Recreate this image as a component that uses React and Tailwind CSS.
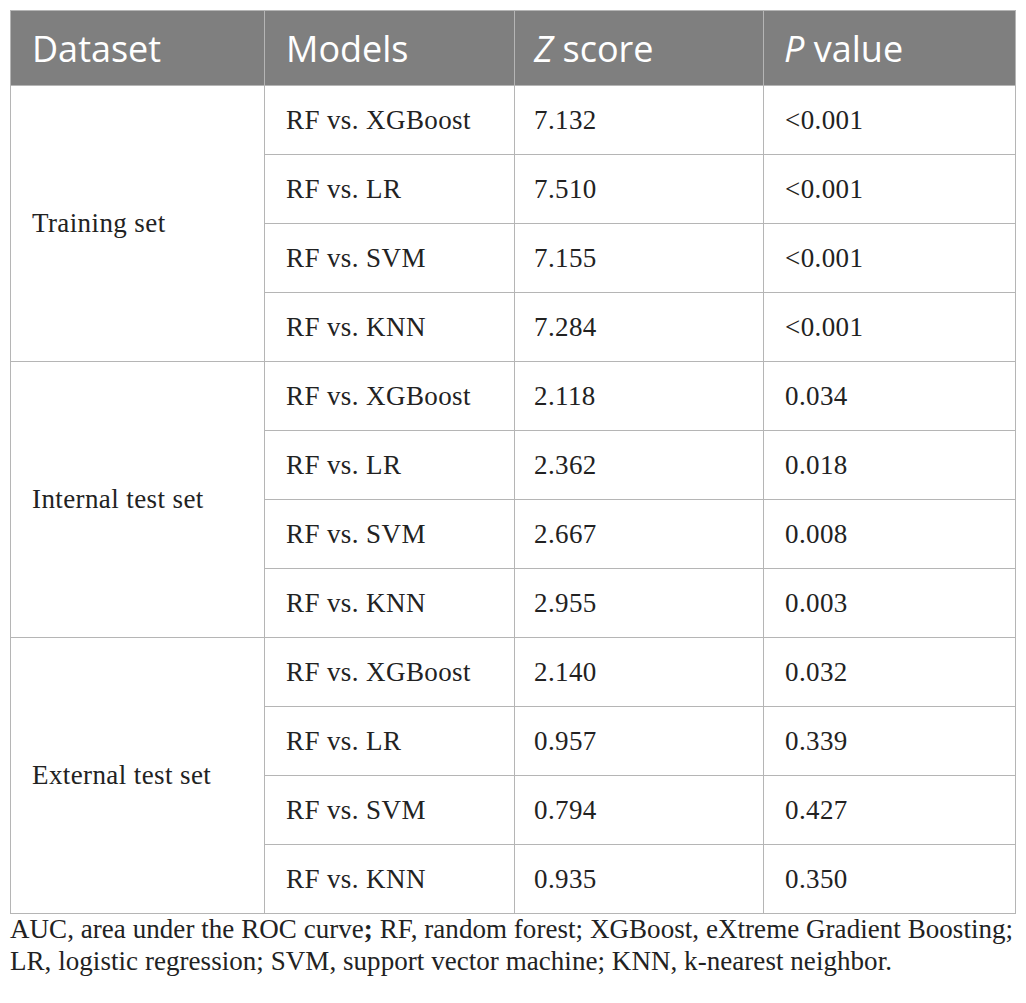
import React from "react";

const groups = [
  {
    name: "Training set",
    rows: [
      ["RF vs. XGBoost", "7.132", "<0.001"],
      ["RF vs. LR", "7.510", "<0.001"],
      ["RF vs. SVM", "7.155", "<0.001"],
      ["RF vs. KNN", "7.284", "<0.001"],
    ],
  },
  {
    name: "Internal test set",
    rows: [
      ["RF vs. XGBoost", "2.118", "0.034"],
      ["RF vs. LR", "2.362", "0.018"],
      ["RF vs. SVM", "2.667", "0.008"],
      ["RF vs. KNN", "2.955", "0.003"],
    ],
  },
  {
    name: "External test set",
    rows: [
      ["RF vs. XGBoost", "2.140", "0.032"],
      ["RF vs. LR", "0.957", "0.339"],
      ["RF vs. SVM", "0.794", "0.427"],
      ["RF vs. KNN", "0.935", "0.350"],
    ],
  },
];

const serif = { fontFamily: '"Liberation Serif", "Times New Roman", serif' };

export default function App() {
  return (
    <div className="bg-white w-[1026px] h-[1003px] pt-[10px] pl-[10px]">
      <table
        className="w-[1005px] border-collapse table-fixed text-[#222]"
        style={serif}
      >
        <colgroup>
          <col className="w-[254px]" />
          <col className="w-[250px]" />
          <col className="w-[249px]" />
          <col className="w-[252px]" />
        </colgroup>
        <thead>
          <tr className="h-[75px] bg-[#7f7f7f] text-white text-[36px] font-['Open_Sans',sans-serif]">
            <th className="border border-[#b5b5b5] text-left font-normal pl-[21px] pt-[2px]">Dataset</th>
            <th className="border border-[#b5b5b5] text-left font-normal pl-[21px] pt-[2px]">Models</th>
            <th className="border border-[#b5b5b5] text-left font-normal pl-[19px] pt-[2px]">
              <i>Z</i> score
            </th>
            <th className="border border-[#b5b5b5] text-left font-normal pl-[20px] pt-[2px]">
              <i>P</i> value
            </th>
          </tr>
        </thead>
        <tbody className="text-[27px] tracking-[0.4px]">
          {groups.map((g) =>
            g.rows.map((r, i) => (
              <tr key={g.name + i} className="h-[69px]">
                {i === 0 && (
                  <td
                    rowSpan={4}
                    className="border border-[#b5b5b5] pl-[21px] align-middle"
                  >
                    {g.name}
                  </td>
                )}
                <td className="border border-[#b5b5b5] pl-[21px]">{r[0]}</td>
                <td className="border border-[#b5b5b5] pl-[19px]">{r[1]}</td>
                <td className="border border-[#b5b5b5] pl-[21px]">{r[2]}</td>
              </tr>
            ))
          )}
        </tbody>
      </table>
      <p
        className="text-[27px] leading-[32px] tracking-[0.05px] text-[#222] whitespace-nowrap mt-[-1px]"
        style={serif}
      >
        AUC, area under the ROC curve<b>;</b> RF, random forest; XGBoost, eXtreme Gradient Boosting;
        <br />
        LR, logistic regression; SVM, support vector machine; KNN, k-nearest neighbor.
      </p>
    </div>
  );
}
